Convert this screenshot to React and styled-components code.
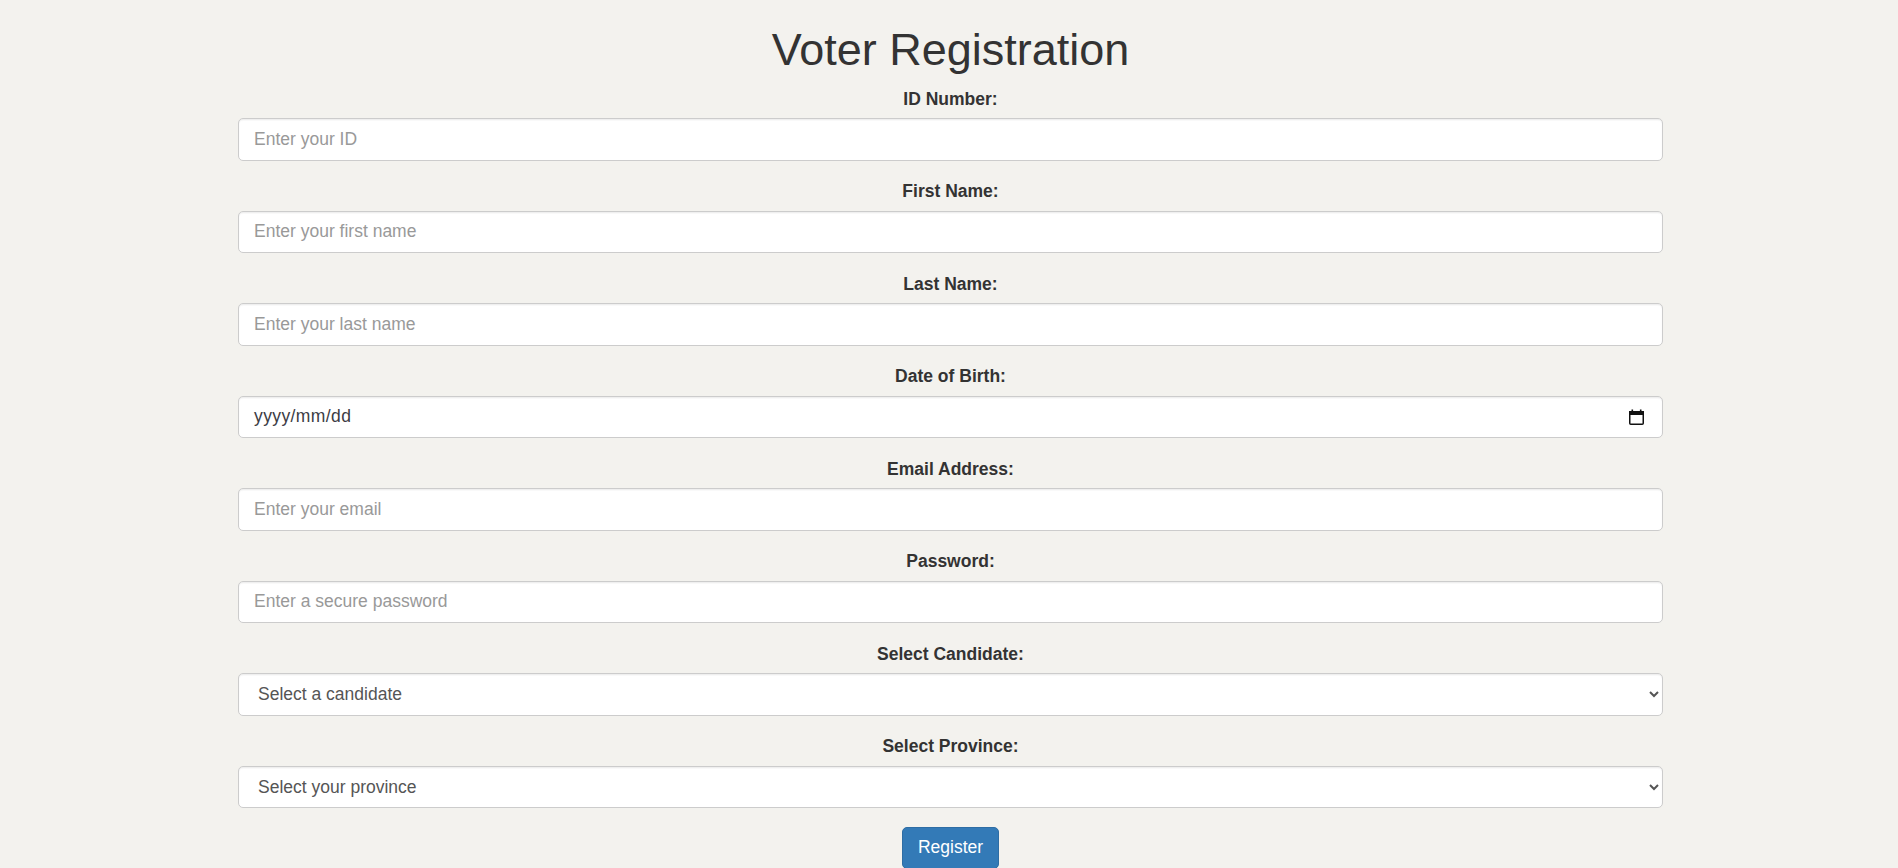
import React from "react";
import styled, { createGlobalStyle } from "styled-components";

// page was captured at 125% zoom, so bootstrap-ish sizes are scaled by 1.25
const GlobalStyle = createGlobalStyle`
  html, body {
    margin: 0;
    padding: 0;
  }
  body {
    background: #f3f2ee;
    font-family: "Liberation Sans", Arial, Helvetica, sans-serif;
    font-size: 17.5px;
    line-height: 1.42857;
    color: #333;
  }
  * {
    box-sizing: border-box;
  }
`;

const fields = [
  { id: "idNumber", label: "ID Number:", placeholder: "Enter your ID" },
  { id: "firstName", label: "First Name:", placeholder: "Enter your first name" },
  { id: "lastName", label: "Last Name:", placeholder: "Enter your last name" },
  { id: "dob", label: "Date of Birth:", type: "date" },
  { id: "email", label: "Email Address:", placeholder: "Enter your email" },
  { id: "password", label: "Password:", placeholder: "Enter a secure password", type: "password" },
  { id: "candidate", label: "Select Candidate:", type: "select", options: ["Select a candidate"] },
  { id: "province", label: "Select Province:", type: "select", options: ["Select your province"] }
];

const CalendarIcon = () => (
  <svg width="15" height="16" viewBox="0 0 15 16">
    <rect x="0.75" y="2.75" width="13.5" height="12.5" rx="1" fill="none" stroke="#111" strokeWidth="1.5" />
    <rect x="0" y="2" width="15" height="4" fill="#111" />
    <rect x="2.5" y="0.5" width="1.6" height="2.5" fill="#111" />
    <rect x="10.9" y="0.5" width="1.6" height="2.5" fill="#111" />
  </svg>
);

export default function App() {
  const renderControl = f => {
    if (f.type === "select") {
      return (
        <Select id={f.id} defaultValue="">
          {f.options.map(o => (
            <option key={o} value="">
              {o}
            </option>
          ))}
        </Select>
      );
    }
    if (f.type === "date") {
      return (
        <DateControl id={f.id}>
          <DateText>yyyy/mm/dd</DateText>
          <IconSlot>
            <CalendarIcon />
          </IconSlot>
        </DateControl>
      );
    }
    return <Input id={f.id} type={f.type || "text"} placeholder={f.placeholder} />;
  };

  return (
    <Page>
      <GlobalStyle />
      <Container>
        <Title>Voter Registration</Title>
        <form onSubmit={e => e.preventDefault()}>
          {fields.map(f => (
            <FormGroup key={f.id}>
              <Label htmlFor={f.id}>{f.label}</Label>
              {renderControl(f)}
            </FormGroup>
          ))}
          <ButtonRow>
            <Button type="submit">Register</Button>
          </ButtonRow>
        </form>
      </Container>
    </Page>
  );
}

const Page = styled.div`
  padding-left: 3px;
`;

const Container = styled.div`
  width: 1462.5px;
  margin: 0 auto;
  padding: 0 18.75px;
`;

const Title = styled.h1`
  font-size: 45px;
  font-weight: 500;
  line-height: 1.1;
  margin: 25px 0 12.5px;
  text-align: center;
  color: #333;
`;

const FormGroup = styled.div`
  margin-bottom: 18.75px;
  text-align: center;
`;

const Label = styled.label`
  display: inline-block;
  max-width: 100%;
  margin-bottom: 6.25px;
  font-weight: bold;
`;

const controlBase = `
  display: block;
  width: 100%;
  height: 42.5px;
  padding: 7.5px 15px;
  font-family: "Liberation Sans", Arial, Helvetica, sans-serif;
  font-size: 17.5px;
  line-height: 1.42857;
  color: #555;
  background: #fff;
  border: 1.25px solid #ccc;
  border-radius: 5px;
  box-shadow: inset 0 1.25px 1.25px rgba(0, 0, 0, 0.075);
  text-align: left;
  outline: none;
`;

const Input = styled.input`
  ${controlBase}
  &::placeholder {
    color: #999;
  }
`;

const Select = styled.select`
  ${controlBase}
`;

const DateControl = styled.div`
  ${controlBase}
  display: flex;
  align-items: center;
  justify-content: space-between;
`;

const DateText = styled.span`
  color: #3c3c44;
  letter-spacing: 0.4px;
`;

const IconSlot = styled.span`
  display: flex;
  margin-right: 3px;
`;

const ButtonRow = styled.div`
  text-align: center;
`;

const Button = styled.button`
  display: inline-block;
  padding: 7.5px 15px;
  font-family: "Liberation Sans", Arial, Helvetica, sans-serif;
  font-size: 17.5px;
  line-height: 1.42857;
  color: #fff;
  background: #337ab7;
  border: 1.25px solid #2e6da4;
  border-radius: 5px;
  cursor: pointer;
`;
